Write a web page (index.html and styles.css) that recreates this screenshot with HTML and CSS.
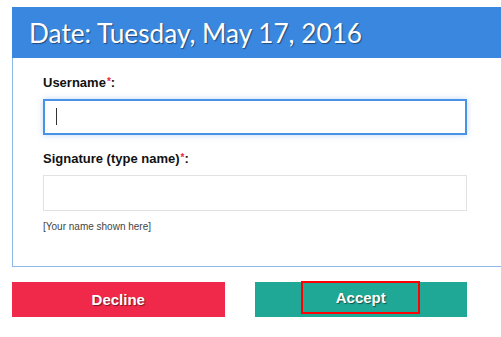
FILE: index.html
```html
<!DOCTYPE html>
<html>
<head>
<meta charset="utf-8">
<link rel="stylesheet" href="styles.css">
</head>
<body>
<div class="panel">
  <div class="panel-header">Date: Tuesday, May 17, 2016</div>
  <div class="panel-body">
    <label class="field-label">Username<span class="req">*</span>:</label>
    <div class="input-wrap">
      <input class="text-input focused" type="text">
      <span class="caret"></span>
    </div>
    <label class="field-label">Signature (type name)<span class="req">*</span>:</label>
    <div class="input-wrap input-last">
      <input class="text-input" type="text">
    </div>
    <div class="hint">[Your name shown here]</div>
  </div>
</div>
<div class="actions">
  <button class="btn btn-decline">Decline</button>
  <button class="btn btn-accept"><span class="focus-ring">Accept</span></button>
</div>
</body>
</html>
```
FILE: styles.css
```css
html, body {
  margin: 0;
  padding: 0;
  background: #ffffff;
  overflow: hidden;
}
body {
  width: 501px;
  height: 337px;
  font-family: "Liberation Sans", Arial, sans-serif;
}
.panel {
  margin: 7px 0 0 12px;
  width: 520px;
}
.panel-header {
  height: 51px;
  background: #3a87e0;
  color: #ffffff;
  display: flex;
  align-items: center;
  padding-left: 17px;
  font-family: Lato, sans-serif;
  font-size: 26.2px;
  text-shadow: 1px 1px 1px rgba(0, 0, 0, 0.45);
}
.panel-body {
  border-left: 1px solid #8cb8ea;
  border-bottom: 1px solid #8cb8ea;
  padding: 17px 0 33px 30px;
}
.field-label {
  display: block;
  font-size: 13px;
  line-height: 15px;
  font-weight: bold;
  color: #111111;
  margin-bottom: 9px;
}
.req {
  color: #e8283c;
  font-size: 10px;
  line-height: 0;
  vertical-align: 2px;
  margin-left: 1px;
}
.input-wrap {
  position: relative;
  width: 424px;
  height: 36px;
  margin-bottom: 16px;
}
.input-wrap.input-last {
  margin-bottom: 10px;
}
.text-input {
  box-sizing: border-box;
  width: 424px;
  height: 36px;
  margin: 0;
  padding: 0 12px;
  border: 1px solid #e2e2e2;
  background: #ffffff;
  outline: none;
  display: block;
}
.text-input.focused {
  border: 2px solid #4a92e6;
  box-shadow: 0 0 6px rgba(74, 146, 230, 0.35);
}
.caret {
  position: absolute;
  left: 13px;
  top: 9px;
  width: 1px;
  height: 17px;
  background: #333333;
}
.hint {
  font-size: 10px;
  line-height: 12px;
  color: #444444;
}
.actions {
  display: flex;
  gap: 30px;
  margin: 15px 0 0 12px;
  width: 455px;
}
.btn {
  flex: 1;
  height: 35px;
  border: none;
  margin: 0;
  padding: 0;
  color: #ffffff;
  font-family: "Liberation Sans", Arial, sans-serif;
  font-size: 15px;
  font-weight: bold;
  text-shadow: 1px 1px 1px rgba(0, 0, 0, 0.5);
  display: flex;
  align-items: center;
  justify-content: center;
}
.btn-decline {
  background: #f0294a;
}
.btn-accept {
  background: #20a897;
  align-items: flex-start;
}
.focus-ring {
  box-sizing: border-box;
  width: 119px;
  height: 33px;
  margin-top: -1px;
  border: 2px solid #ff0000;
  display: flex;
  align-items: center;
  justify-content: center;
}
```
